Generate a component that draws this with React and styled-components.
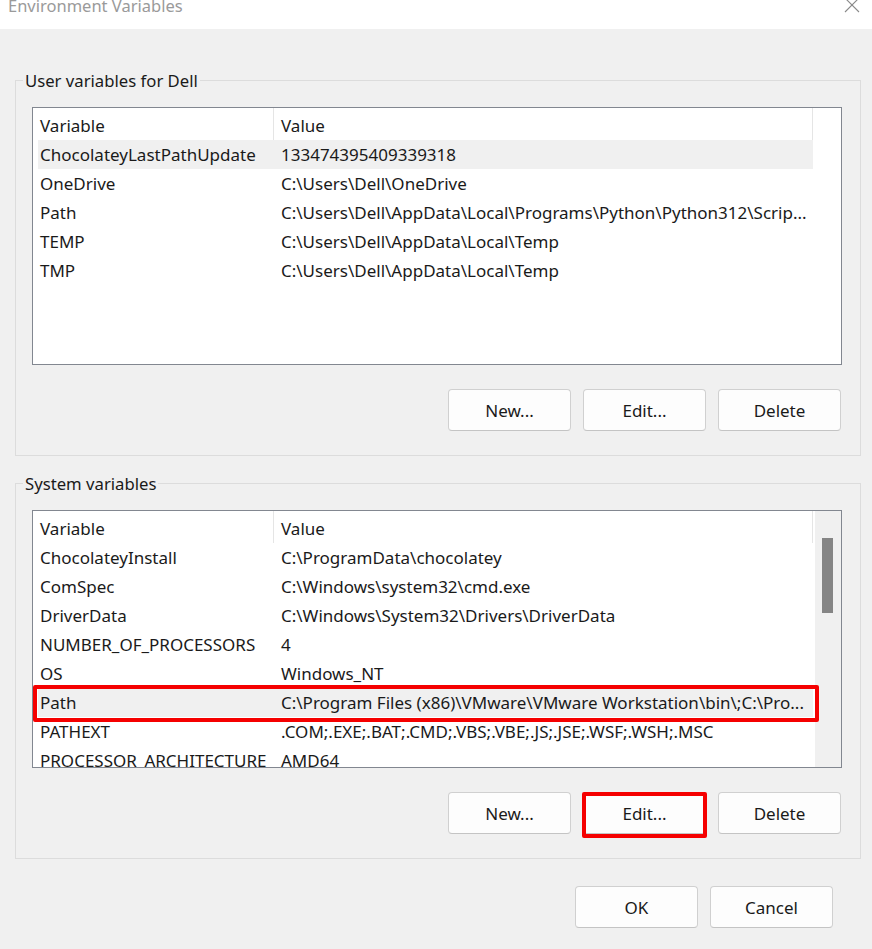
import React from 'react';
import styled, { createGlobalStyle } from 'styled-components';

const userVars = [
  ['ChocolateyLastPathUpdate', '133474395409339318', true],
  ['OneDrive', 'C:\\Users\\Dell\\OneDrive'],
  ['Path', 'C:\\Users\\Dell\\AppData\\Local\\Programs\\Python\\Python312\\Scrip...'],
  ['TEMP', 'C:\\Users\\Dell\\AppData\\Local\\Temp'],
  ['TMP', 'C:\\Users\\Dell\\AppData\\Local\\Temp'],
];

const systemVars = [
  ['ChocolateyInstall', 'C:\\ProgramData\\chocolatey'],
  ['ComSpec', 'C:\\Windows\\system32\\cmd.exe'],
  ['DriverData', 'C:\\Windows\\System32\\Drivers\\DriverData'],
  ['NUMBER_OF_PROCESSORS', '4'],
  ['OS', 'Windows_NT'],
  ['Path', 'C:\\Program Files (x86)\\VMware\\VMware Workstation\\bin\\;C:\\Pro...', true, true],
  ['PATHEXT', '.COM;.EXE;.BAT;.CMD;.VBS;.VBE;.JS;.JSE;.WSF;.WSH;.MSC'],
  ['PROCESSOR_ARCHITECTURE', 'AMD64'],
];

const VarList = ({ rows, scroll }) => (
  <List>
    <ListContent>
      <HeaderRow>
        <HeaderCell $w={241}>Variable</HeaderCell>
        <HeaderCell $w={539}>Value</HeaderCell>
      </HeaderRow>
      {rows.map(([name, value, selected, marked]) => (
        <Row key={name + value} $selected={selected}>
          <NameCell>{name}</NameCell>
          <ValueCell>{value}</ValueCell>
          {marked && <RowMark />}
        </Row>
      ))}
    </ListContent>
    {scroll && (
      <ScrollTrack>
        <ScrollThumb />
      </ScrollTrack>
    )}
  </List>
);

const ButtonRow = ({ markEdit }) => (
  <Buttons>
    <Button>New...</Button>
    <Button>
      Edit...
      {markEdit && <ButtonMark />}
    </Button>
    <Button>Delete</Button>
  </Buttons>
);

export default function App() {
  return (
    <>
      <GlobalStyle />
      <Window>
        <TitleBar>
          <Title>Environment Variables</Title>
          <svg width="16" height="16" viewBox="0 0 16 16" style={{ marginTop: -3 }}>
            <path d="M1 1 L15 15 M15 1 L1 15" stroke="#8a8a8a" strokeWidth="1.1" fill="none" />
          </svg>
        </TitleBar>
        <Body>
          <Group>
            <Legend>User variables for Dell</Legend>
            <VarList rows={userVars} />
            <ButtonRow />
          </Group>
          <Group>
            <Legend>System variables</Legend>
            <VarList rows={systemVars} scroll />
            <ButtonRow markEdit />
          </Group>
          <Footer>
            <Button>OK</Button>
            <Button>Cancel</Button>
          </Footer>
        </Body>
      </Window>
    </>
  );
}

const GlobalStyle = createGlobalStyle`
  body {
    margin: 0;
    background: #f0f0f0;
    font-family: "Noto Sans", "Open Sans", sans-serif;
    color: #1a1a1a;
  }
`;

const Window = styled.div`
  width: 872px;
  height: 949px;
  display: flex;
  flex-direction: column;
  overflow: hidden;
  background: #f0f0f0;
`;

const TitleBar = styled.div`
  height: 29px;
  background: #fff;
  display: flex;
  justify-content: space-between;
  align-items: flex-start;
  padding: 0 12px 0 8px;
  overflow: hidden;
`;

const Title = styled.div`
  font-size: 16.5px;
  line-height: 18px;
  margin-top: -3px;
  color: #9a9a9a;
`;

const Body = styled.div`
  flex: 1;
  padding: 51px 12px 0 15px;
  display: flex;
  flex-direction: column;
`;

const Group = styled.div`
  width: 846px;
  box-sizing: border-box;
  border: 1px solid #dcdcdc;
  padding: 0 18px 24px 16px;
  margin-bottom: 27px;
`;

const Legend = styled.div`
  width: fit-content;
  margin: -12px 0 15px -9px;
  padding: 0 2px;
  background: #f0f0f0;
  font-size: 16.7px;
  line-height: 23px;
`;

const List = styled.div`
  width: 810px;
  height: 258px;
  box-sizing: border-box;
  border: 1px solid #828790;
  background: #fff;
  display: flex;
  overflow: hidden;
`;

const ListContent = styled.div`
  width: 781px;
`;

const HeaderRow = styled.div`
  display: flex;
  height: 32px;
`;

const HeaderCell = styled.div`
  width: ${(p) => p.$w}px;
  box-sizing: border-box;
  padding: 6px 0 0 7px;
  border-right: 1px solid #e5e5e5;
  font-size: 17px;
  line-height: 23px;
`;

const Row = styled.div`
  position: relative;
  display: flex;
  height: 29px;
  margin-left: 5px;
  width: 775px;
  align-items: center;
  background: ${(p) => (p.$selected ? '#f0f0f0' : 'transparent')};
  font-size: 17px;
  white-space: nowrap;
`;

const NameCell = styled.div`
  width: 236px;
  padding-left: 2px;
  box-sizing: border-box;
  overflow: hidden;
`;

const ValueCell = styled.div`
  flex: 1;
  padding-left: 7px;
  overflow: hidden;
`;

const RowMark = styled.div`
  position: absolute;
  top: -3px;
  bottom: -5px;
  left: -5px;
  right: -6px;
  border: 4px solid #f50000;
  border-radius: 2px;
`;

const ScrollTrack = styled.div`
  width: 26px;
  background: #f0f0f0;
  margin-left: 1px;
  padding: 27px 0 0 7px;
  box-sizing: border-box;
`;

const ScrollThumb = styled.div`
  width: 11px;
  height: 75px;
  background: #858585;
`;

const Buttons = styled.div`
  display: flex;
  justify-content: flex-end;
  gap: 12px;
  margin-top: 24px;
  padding-right: 1px;
`;

const Button = styled.button`
  position: relative;
  width: 123px;
  height: 42px;
  box-sizing: border-box;
  border: 1px solid #d0d0d0;
  border-bottom-color: #c4c4c4;
  border-radius: 4px;
  background: #fdfdfd;
  font-family: inherit;
  font-size: 17px;
  color: #1a1a1a;
  padding: 0;
`;

const ButtonMark = styled.span`
  position: absolute;
  top: -1px;
  left: -2px;
  right: -2px;
  bottom: -5px;
  border: 4px solid #f50000;
  border-radius: 2px;
`;

const Footer = styled.div`
  display: flex;
  justify-content: flex-end;
  gap: 12px;
  padding-right: 27px;
`;
